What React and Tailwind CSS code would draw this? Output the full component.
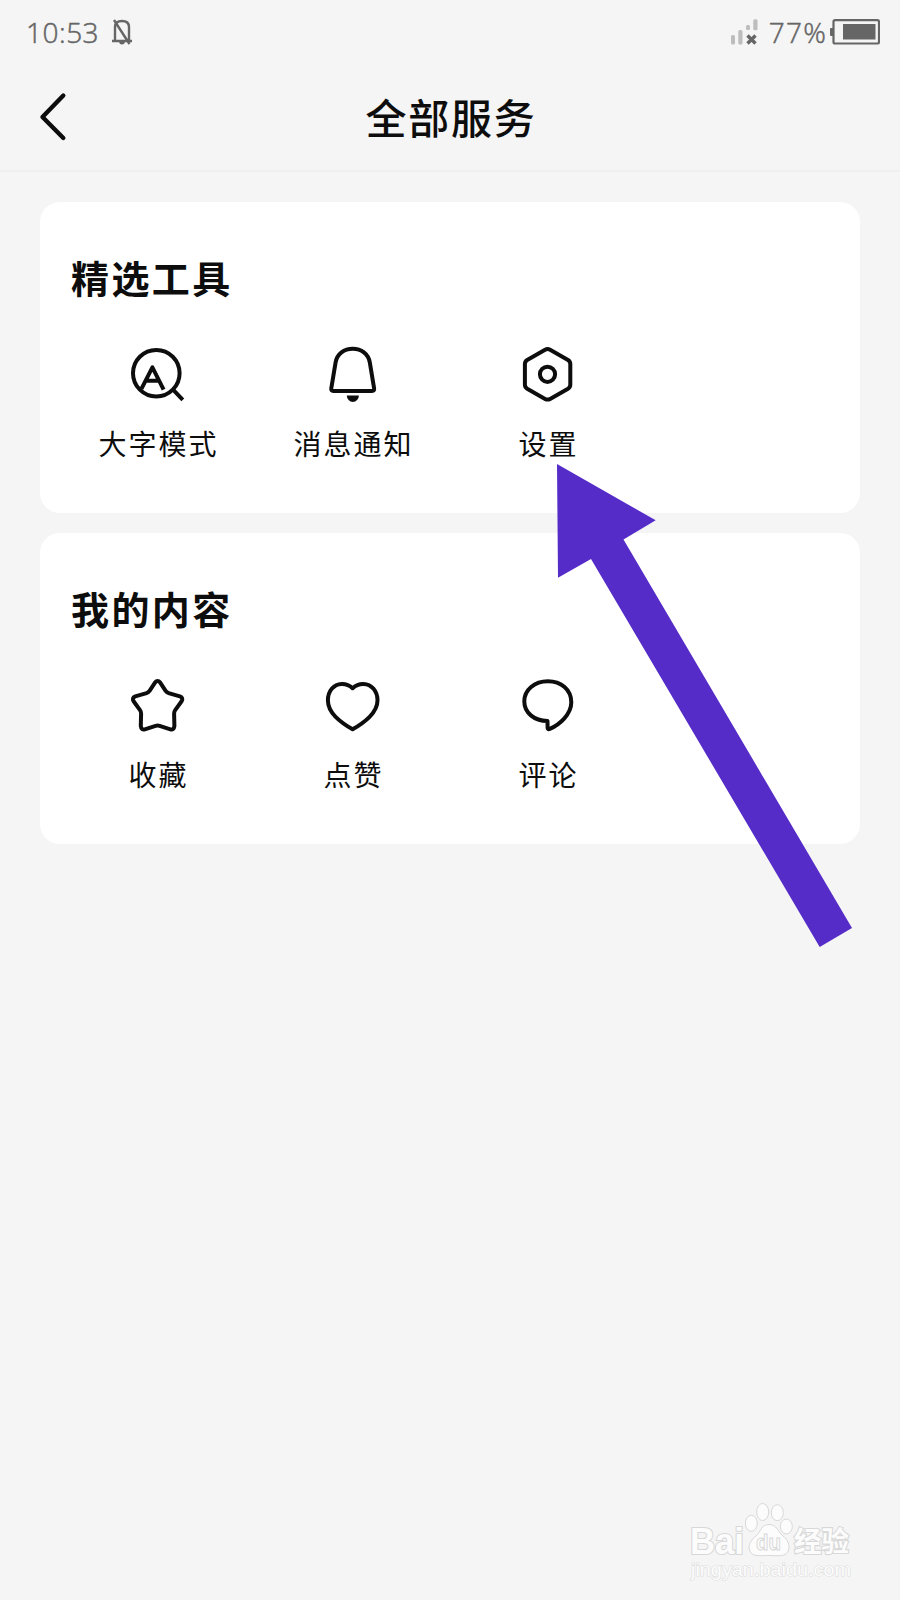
const kai = "font-['KaiTi','Kaiti_SC','STKaiti','Noto_Sans_CJK_SC',sans-serif]";

function Icon({ children }) {
  return (
    <svg
      className="h-[60px] w-[60px]"
      viewBox="0.4 -0.3 60 60"
      fill="none"
      stroke="#0d0d0d"
      strokeWidth="4"
      strokeLinejoin="round"
    >
      {children}
    </svg>
  );
}

const LargeText = () => (
  <Icon>
    <circle cx="28.7" cy="27.9" r="23.3" />
    <path d="M45.2 44l10 10.5M13.8 43.5L24.8 22L36 44.3M18.5 35.5H31" />
  </Icon>
);

const Bell = () => (
  <Icon>
    <path d="M13 17C14.5 8.5 21.5 3.4 30.1 3.4S45.7 8.5 47.2 17L51.5 43Q51.9 45.6 49.5 45.6H10.7Q8.3 45.6 8.7 43Z" />
    <path d="M24.2 50.3H36.3A6 6.3 0 0 1 24.2 50.3Z" fill="#0d0d0d" stroke="none" />
  </Icon>
);

const Hexagon = () => (
  <Icon>
    <path d="M27.5 4.5Q30 3.1 32.5 4.5L50.4 14.7Q52.7 16.1 52.7 18.7V39.4Q52.7 42 50.4 43.4L32.5 53.6Q30 55 27.5 53.6L9.6 43.4Q7.3 42 7.3 39.4V18.7Q7.3 16.1 9.6 14.7Z" />
    <circle cx="29.9" cy="29" r="7.6" />
  </Icon>
);

const Star = () => (
  <Icon>
    <path d="M27.4 6.3Q30 3 32.6 6.3L38.2 14.8Q39 16.2 41 16.8L52.3 20Q56 21.5 54 25L47.6 33.8Q46.5 35.3 46.5 37.3L46.8 49.8Q46.3 54 42.8 53L32 49.6Q30 49 28 49.6L17.2 53Q13.7 54 13.2 49.8L13.5 37.3Q13.5 35.3 12.4 33.8L6 25Q4 21.5 7.7 20L19 16.8Q21 16.2 21.8 14.8Z" />
  </Icon>
);

const Heart = () => (
  <Icon>
    <path d="M30 11.9C26.3 8.3 22 7.5 19 7.6C11 7.8 5.3 15 5.3 24C5.3 31 8.5 36 13 40.5C17.5 45 24 49.5 30 53C36 49.5 42.5 45 47 40.5C51.5 36 54.9 31 54.9 24C54.9 15 49 7.8 41 7.6C37.5 7.5 33.7 8.3 30 11.9Z" />
  </Icon>
);

const Comment = () => (
  <Icon>
    <path d="M29.9 44.8C16.5 44.5 6.7 36.5 6.7 25C6.7 13.5 17 4.9 30.2 4.9C43.5 4.9 53.7 13.5 53.7 26C53.7 38 42 48.5 31.6 52.9Q30.2 53.3 30 51.5Z" />
  </Icon>
);

function Card({ title, items }) {
  return (
    <section className="h-[311px] rounded-[20px] bg-white px-5 pt-[45px]">
      <h2 className="pl-[11px] text-[38px] leading-[60px] font-bold tracking-[2.4px]">{title}</h2>
      <div className="mt-[38px] grid grid-cols-4">
        {items.map(([label, Glyph]) => (
          <div key={label} className="flex flex-col items-center">
            <Glyph />
            <span className="mt-[18px] pl-[2px] text-[28px] leading-[40px] tracking-[2px] whitespace-nowrap">
              {label}
            </span>
          </div>
        ))}
      </div>
    </section>
  );
}

function StatusBar() {
  return (
    <div className="flex h-[63px] items-center justify-between pr-5 pl-[26px] font-['Open_Sans',sans-serif] text-[28px] leading-none font-light text-[#666]">
      <div className="flex items-center gap-[12px]">
        <span className="tracking-[0.5px] [-webkit-text-stroke:0.5px_#666]">10:53</span>
        <svg className="h-[28px] w-[22px]" viewBox="0 0 22 28" fill="none" stroke="#666" strokeWidth="2.4">
          <path d="M1 23H21M4 22V9Q4 3 11 3T18 9V22M3 2L18.500 26" />
          <path d="M8 24H14Q13.500 26.500 11 26.500T8 24Z" fill="#666" stroke="none" />
        </svg>
      </div>
      <div className="flex items-center">
        <svg className="mr-[10px] h-[26px] w-[28px]" viewBox="0 0 28 26">
          <g fill="#bdbdbd">
            <rect x="0" y="16" width="4" height="9.500" rx="1.500" />
            <rect x="7.300" y="11" width="4.200" height="14.500" rx="1.500" />
            <rect x="15" y="6" width="4" height="5" rx="1.500" />
            <rect x="22.300" y="0.300" width="4.200" height="11" rx="1.500" />
          </g>
          <path d="M16.500 16.500l8 8m0-8l-8 8" stroke="#666" strokeWidth="3.4" />
        </svg>
        <span className="mr-[3px] tracking-[1.2px] [-webkit-text-stroke:0.5px_#666]">77%</span>
        <svg className="h-[26px] w-[50px]" viewBox="0 0 50 26">
          <rect x="0" y="9" width="4" height="8" rx="1" fill="#666" />
          <rect x="3.500" y="1.200" width="45.500" height="23.300" rx="1.500" fill="none" stroke="#666" strokeWidth="2.200" />
          <rect x="13" y="5" width="32.500" height="15.500" fill="#666" />
        </svg>
      </div>
    </div>
  );
}

function Watermark() {
  return (
    <svg
      className="absolute top-[1500px] left-[670px] h-[86px] w-[200px]"
      viewBox="0 0 200 86"
      fill="#fcfcfc"
      stroke="#d8d8d8"
      strokeWidth="1"
      fontFamily="'Liberation Sans', 'Noto Sans CJK SC', sans-serif"
    >
      <g fontWeight="bold" paintOrder="stroke" strokeWidth="2.2">
        <text x="20" y="53.500" fontSize="36" textLength="54" lengthAdjust="spacingAndGlyphs">Bai</text>
        <text x="124" y="52" fontSize="28" textLength="55" lengthAdjust="spacingAndGlyphs">经验</text>
      </g>
      <ellipse cx="81.300" cy="23.300" rx="6" ry="8" />
      <ellipse cx="92.700" cy="12" rx="6" ry="8.500" />
      <ellipse cx="107.300" cy="12.700" rx="6" ry="8" />
      <ellipse cx="116.300" cy="26.500" rx="6" ry="7.500" />
      <path d="M99 24.500C107 24.500 107 31 113 36C118 40 120 45 118.500 50C116.500 57.500 108 55.500 99 55.500S82 57.500 79.500 50C78 45 81 40 86 36C91.500 31 91 24.500 99 24.500Z" />
      <text x="86" y="50" fontSize="22" fontWeight="bold" textLength="25" lengthAdjust="spacingAndGlyphs">du</text>
      <text x="21" y="75.500" fontSize="19" stroke="#dedede" strokeWidth="1.2" paintOrder="stroke" textLength="160" lengthAdjust="spacingAndGlyphs">jingyan.baidu.com</text>
    </svg>
  );
}

export default function App() {
  return (
    <div className={`relative h-[1600px] w-[900px] overflow-hidden bg-[#f5f5f5] text-[#0d0d0d] ${kai}`}>
      <StatusBar />
      <header className="grid h-[109px] grid-cols-[80px_1fr_80px] items-center border-b-2 border-[#efefef]">
        <svg className="ml-[38px] h-[50px] w-[30px]" viewBox="0 0 30 50" fill="none" stroke="#0d0d0d" strokeWidth="4.400" strokeLinecap="round" strokeLinejoin="round">
          <path d="M25.300 3.500L4.500 25L25.300 46" />
        </svg>
        <h1 className="pb-[1px] pl-[2px] text-center text-[41px] leading-[60px] font-medium tracking-[1.800px]">全部服务</h1>
      </header>
      <main className="flex flex-col gap-5 px-10 pt-[30px]">
        <Card title="精选工具" items={[["大字模式", LargeText], ["消息通知", Bell], ["设置", Hexagon]]} />
        <Card title="我的内容" items={[["收藏", Star], ["点赞", Heart], ["评论", Comment]]} />
      </main>
      <svg className="absolute top-[464px] left-[557px] h-[484px] w-[296px]" viewBox="557 464 296 484" fill="#562cc9">
        <path d="M557 464L655.700 520.300L623.500 539.500L852 928L819.700 947L591 559L558 577.700Z" />
      </svg>
      <Watermark />
    </div>
  );
}
